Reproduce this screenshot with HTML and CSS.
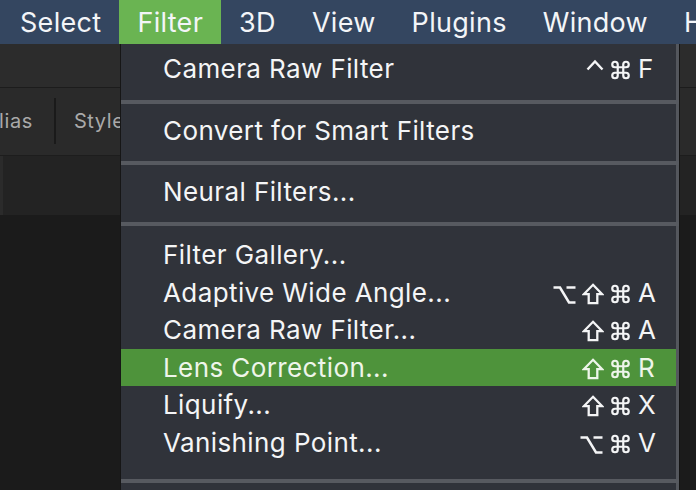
FILE: index.html
```html
<!DOCTYPE html>
<html>
<head>
<meta charset="utf-8">
<link rel="stylesheet" href="styles.css">
</head>
<body>
<div class="app">
  <nav class="menubar">
    <span class="mb-item">Select</span>
    <span class="mb-item active">Filter</span>
    <span class="mb-item">3D</span>
    <span class="mb-item">View</span>
    <span class="mb-item">Plugins</span>
    <span class="mb-item">Window</span>
    <span class="mb-item">Help</span>
  </nav>
  <div class="workspace">
    <div class="toolbar"></div>
    <div class="options">
      <span class="opt first">Anti-alias</span>
      <span class="opt-div"></span>
      <span class="opt">Style</span>
    </div>
    <div class="tabs"><span class="tab-edge"></span></div>
    <div class="canvas"></div>
  </div>

  <div class="menu">
    <div class="section s1">
      <div class="item"><span class="label">Camera Raw Filter</span><span class="sc"><span class="mods">
        <svg class="ic ctrl" viewBox="0 0 18 12"><polyline points="1.5,10.5 9,2.5 16.5,10.5"/></svg>
        <svg class="ic cmd" viewBox="0 0 24 24"><path d="M15 6v12a3 3 0 1 0 3-3H6a3 3 0 1 0 3 3V6a3 3 0 1 0-3 3h12a3 3 0 1 0-3-3z"/></svg>
      </span><span class="key">F</span></span></div>
    </div>
    <div class="sep"></div>
    <div class="section s2">
      <div class="item"><span class="label">Convert for Smart Filters</span></div>
    </div>
    <div class="sep"></div>
    <div class="section s3">
      <div class="item"><span class="label">Neural Filters...</span></div>
    </div>
    <div class="sep"></div>
    <div class="section s4">
      <div class="item"><span class="label">Filter Gallery...</span></div>
      <div class="item"><span class="label">Adaptive Wide Angle...</span><span class="sc"><span class="mods">
        <svg class="ic opt-ic" viewBox="0 0 24 20"><path d="M1 2.5h6.5l9 15H23M14 2.5h9"/></svg>
        <svg class="ic shift" viewBox="0 0 22 22"><path d="M11 1.8 20.2 11.2h-4.9V20.2H6.7V11.2H1.8Z"/></svg>
        <svg class="ic cmd" viewBox="0 0 24 24"><path d="M15 6v12a3 3 0 1 0 3-3H6a3 3 0 1 0 3 3V6a3 3 0 1 0-3 3h12a3 3 0 1 0-3-3z"/></svg>
      </span><span class="key">A</span></span></div>
      <div class="item"><span class="label">Camera Raw Filter...</span><span class="sc"><span class="mods">
        <svg class="ic shift" viewBox="0 0 22 22"><path d="M11 1.8 20.2 11.2h-4.9V20.2H6.7V11.2H1.8Z"/></svg>
        <svg class="ic cmd" viewBox="0 0 24 24"><path d="M15 6v12a3 3 0 1 0 3-3H6a3 3 0 1 0 3 3V6a3 3 0 1 0-3 3h12a3 3 0 1 0-3-3z"/></svg>
      </span><span class="key">A</span></span></div>
      <div class="item hl"><span class="label">Lens Correction...</span><span class="sc"><span class="mods">
        <svg class="ic shift" viewBox="0 0 22 22"><path d="M11 1.8 20.2 11.2h-4.9V20.2H6.7V11.2H1.8Z"/></svg>
        <svg class="ic cmd" viewBox="0 0 24 24"><path d="M15 6v12a3 3 0 1 0 3-3H6a3 3 0 1 0 3 3V6a3 3 0 1 0-3 3h12a3 3 0 1 0-3-3z"/></svg>
      </span><span class="key">R</span></span></div>
      <div class="item"><span class="label">Liquify...</span><span class="sc"><span class="mods">
        <svg class="ic shift" viewBox="0 0 22 22"><path d="M11 1.8 20.2 11.2h-4.9V20.2H6.7V11.2H1.8Z"/></svg>
        <svg class="ic cmd" viewBox="0 0 24 24"><path d="M15 6v12a3 3 0 1 0 3-3H6a3 3 0 1 0 3 3V6a3 3 0 1 0-3 3h12a3 3 0 1 0-3-3z"/></svg>
      </span><span class="key">X</span></span></div>
      <div class="item"><span class="label">Vanishing Point...</span><span class="sc"><span class="mods">
        <svg class="ic opt-ic" viewBox="0 0 24 20"><path d="M1 2.5h6.5l9 15H23M14 2.5h9"/></svg>
        <svg class="ic cmd" viewBox="0 0 24 24"><path d="M15 6v12a3 3 0 1 0 3-3H6a3 3 0 1 0 3 3V6a3 3 0 1 0-3 3h12a3 3 0 1 0-3-3z"/></svg>
      </span><span class="key">V</span></span></div>
    </div>
    <div class="sep"></div>
  </div>
</div>
</body>
</html>
```

FILE: styles.css
```css
* { box-sizing: border-box; }
html, body { margin: 0; padding: 0; }
body {
  width: 696px;
  height: 490px;
  overflow: hidden;
  background: #1b1b1b;
  font-family: Inter, "Noto Sans", "Liberation Sans", sans-serif;
}
.app {
  position: relative;
  width: 696px;
  height: 490px;
  display: flex;
  flex-direction: column;
  overflow: hidden;
}
.menubar {
  height: 44px;
  flex: none;
  background: #344660;
  display: flex;
  align-items: stretch;
  padding-left: 2px;
  white-space: nowrap;
}
.mb-item {
  display: flex;
  align-items: center;
  padding: 0 18px 0 18px;
  color: #f3f5f8;
  font-size: 27px;
  letter-spacing: 0.3px;
}
.mb-item.active { background: #6ab452; }

.workspace {
  flex: 1;
  display: flex;
  flex-direction: column;
}
.toolbar {
  height: 44px;
  background: #2c2c2c;
  border-bottom: 1px solid #1c1c1c;
}
.options {
  height: 68px;
  background: #2a2a2a;
  border-bottom: 1px solid #1d1d1d;
  display: flex;
  align-items: center;
  margin-left: -62px;
  padding-bottom: 2px;
}
.opt {
  color: #a9a9a9;
  font-size: 20px;
  letter-spacing: 0.6px;
  padding: 0 18px;
}
.opt.first { padding-left: 0; padding-right: 21px; }
.opt-div {
  width: 2px;
  height: 46px;
  background: #1a1a1a;
}
.tabs {
  height: 59px;
  background: #232323;
  display: flex;
}
.tab-edge {
  width: 3px;
  background: #2b2b2b;
}
.canvas {
  flex: 1;
  background: #1b1b1b;
}

.menu {
  position: absolute;
  left: 120px;
  top: 44px;
  width: 559px;
  bottom: 0;
  background: #30333a;
  border-left: 1px solid #161616;
  border-right: 3px solid #54575d;
  box-shadow: 1px 0 0 #141414;
  display: flex;
  flex-direction: column;
}
.section { display: flex; flex-direction: column; }
.s1 { padding: 6px 0 12px; }
.s2 { padding: 8px 0 12px; }
.s3 { padding: 8px 0 11px; }
.s4 { padding: 10px 0 18px; }
.sep {
  height: 4px;
  background: #575a60;
  margin-right: -3px;
  flex: none;
}
.item {
  height: 37.6px;
  display: flex;
  align-items: center;
  justify-content: space-between;
  padding: 0 18px 0 42px;
  color: #f4f5f6;
  font-size: 26px;
  white-space: nowrap;
}
.item.hl {
  background: #4e933b;
  color: #eef5ea;
}
.label { letter-spacing: 0.4px; }
.sc {
  display: flex;
  align-items: center;
}
.mods {
  display: flex;
  align-items: flex-end;
  gap: 5px;
  margin-right: 6px;
  height: 21px;
  transform: translateY(2px);
}
.ic {
  display: block;
  flex: none;
  fill: none;
  stroke: currentColor;
  stroke-width: 2.3;
  stroke-linejoin: miter;
}
.ic.cmd { width: 23px; height: 22px; stroke-width: 2.4; }
.ic.shift { width: 22px; height: 22px; stroke-width: 2.3; }
.ic.opt-ic { width: 25px; height: 20px; stroke-width: 2.5; }
.ic.ctrl { width: 18px; height: 12px; stroke-width: 2.4; align-self: flex-start; margin-right: 0; margin-top: -1px; }
.key {
  width: 20px;
  text-align: left;
}
```
